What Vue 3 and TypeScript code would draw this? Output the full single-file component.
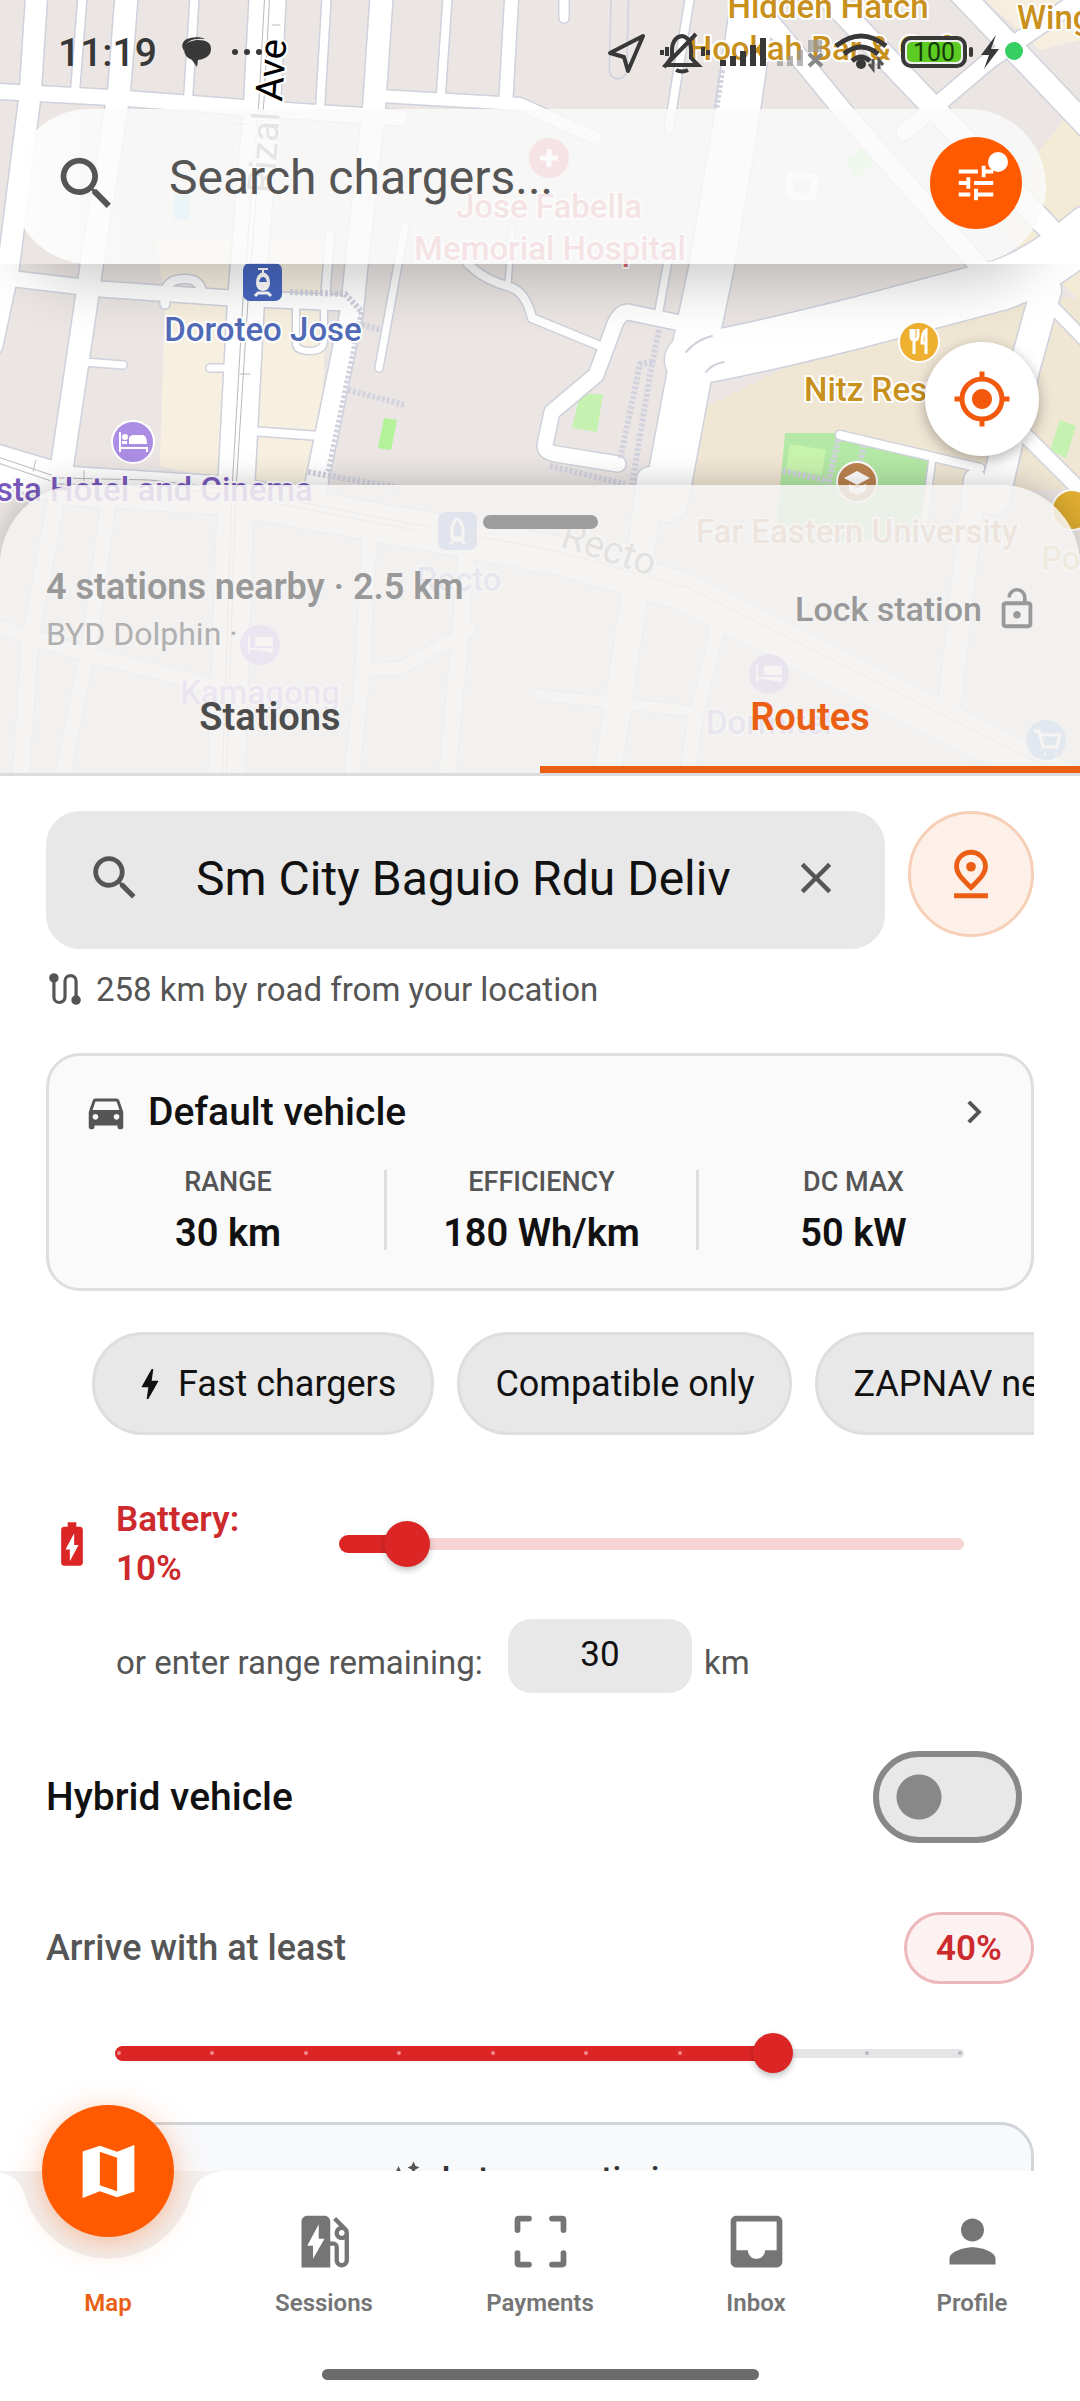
<script setup lang="ts">
import { computed, ref } from 'vue'

interface Road { d: string; w: number }
interface Block { d: string; fill: string }
interface Tab { label: string; icon: string }

const roads: Road[] = [
  { d: 'M37-10L30 96L8 270L-8 345', w: 21 },
  { d: 'M83-10L75 92', w: 8 },
  { d: 'M127-10L119 92L91 270L62 466', w: 22 },
  { d: 'M195-10L188 100', w: 8 },
  { d: 'M268-10L262 105L246 300L236 490L226 790', w: 36 },
  { d: 'M327-10L320 110', w: 8 },
  { d: 'M382-10L374 108L356 270L352 310L316 486', w: 22 },
  { d: 'M448-10L441 94', w: 8 },
  { d: 'M512-10L506 98', w: 13 },
  { d: 'M564-10L564 18', w: 9 },
  { d: 'M691-10L669 128', w: 8 },
  { d: 'M-10 91L120 98L250 108L400 118', w: 15 },
  { d: 'M380 96L520 104L595 138', w: 12 },
  { d: 'M-10 276L100 289L230 298L345 303', w: 15 },
  { d: 'M165 291Q168 279 185 279Q200 279 202 292', w: 8 },
  { d: 'M165 296V304', w: 9 },
  { d: 'M84 362L123 365', w: 7 },
  { d: 'M210 368H232', w: 7 },
  { d: 'M250 431L320 436', w: 8 },
  { d: 'M296 306V345Q298 351 310 351Q324 351 324 340V306', w: 6 },
  { d: 'M405 226L379 368', w: 7 },
  { d: 'M330 235L325 300', w: 8 },
  { d: 'M468 264Q484 280 510 287Q526 292 532 318L605 348', w: 8 },
  { d: 'M512 230L508 284', w: 5 },
  { d: 'M685 324L628 312Q618 312 612 332L596 375L552 412L545 445Q545 452 556 454L618 464', w: 15 },
  { d: 'M670 250L658 316', w: 7 },
  { d: 'M752 10L735 130L712 265L694 350L666 500', w: 44 },
  { d: 'M744-10L844 112L1000 290', w: 18 },
  { d: 'M812-20L930 104L1060 240', w: 22 },
  { d: 'M948-20L1100 140', w: 22 },
  { d: 'M1100-15L990 60L905 132', w: 16 },
  { d: 'M690 360Q750 350 860 322L1000 285Q1040 272 1090 230', w: 50 },
  { d: 'M1046 290L1024 370L994 500', w: 30 },
  { d: 'M1046 300L1100 356', w: 12 },
  { d: 'M1010 420L1100 510', w: 14 },
  { d: 'M840 435L980 468', w: 8 },
  { d: 'M932 462L922 540', w: 6 },
  { d: 'M-10 462L70 486L230 496L420 530L560 556L680 590L1100 800', w: 38 },
  { d: 'M60 480L30 640L20 790', w: 16 },
  { d: 'M110 490L90 640L60 790', w: 14 },
  { d: 'M370 530L362 680L350 790', w: 14 },
  { d: 'M467 545L460 640L446 790', w: 16 },
  { d: 'M-10 625L90 655L230 690', w: 14 },
  { d: 'M360 670L400 668L470 630', w: 12 },
  { d: 'M650 480L640 560L605 790', w: 26 },
  { d: 'M975 480L950 700', w: 22 },
  { d: 'M540 695L700 712', w: 10 },
  { d: 'M720 620L695 720L685 790', w: 14 },
]

const blocks: Block[] = [
  { d: 'M155 240H330L318 484L215 478L160 466L165 300Z', fill: '#f7f0e0' },
  { d: 'M1080 100L1040 150L1000 230L1080 300Z', fill: '#f4ebd6' },
  { d: 'M985 0H1080V40L1040 50Z', fill: '#f6efe0' },
  { d: 'M700 410L860 330L1020 290L1080 300V490H690Z', fill: '#f0e6d4' },
  { d: 'M785 433H840L930 462L922 540H775Z', fill: '#b4e8a6' },
  { d: 'M790 444L826 450L822 475L786 470Z', fill: '#c8f3ad' },
  { d: 'M580 394L603 394L597 432L572 428Z', fill: '#c5f2b0' },
  { d: 'M384 418L397 420L391 450L378 448Z', fill: '#b2f39a' },
  { d: 'M1060 420L1076 426L1066 458L1050 450Z', fill: '#c5f2b0' },
  { d: 'M845 160L870 142L880 158L856 178Z', fill: '#b9edaa' },
  { d: 'M174 195H190V220H174Z', fill: '#9bdcec' },
]

const tabs: Tab[] = [
  { label: 'Map', icon: 'M15 5.1L9 3 3 5.02v16.2l6-2.33 6 2.1 6-2.02V2.77L15 5.1zm0 13.79l-6-2.11V5.11l6 2.11v11.67z' },
  { label: 'Sessions', icon: 'M19.77 7.23l.01-.01-3.72-3.72L15 4.56l2.11 2.11c-.94.36-1.61 1.26-1.61 2.33 0 1.38 1.12 2.5 2.5 2.5.36 0 .69-.08 1-.21v7.21c0 .55-.45 1-1 1s-1-.45-1-1V14c0-1.1-.9-2-2-2h-1V5c0-1.1-.9-2-2-2H6c-1.1 0-2 .9-2 2v16h10v-7.5h1.5v5c0 1.38 1.12 2.5 2.5 2.5s2.5-1.12 2.5-2.5V9c0-.69-.28-1.32-.73-1.77zM18 10c-.55 0-1-.45-1-1s.45-1 1-1 1 .45 1 1-.45 1-1 1zM8 18v-4.5H6L10 6v5h2l-4 7z' },
  { label: 'Payments', icon: 'M4 3h4a1 1 0 0 1 0 2H5v3a1 1 0 0 1-2 0V4.5Q3 3 4.500 3zM16 3h3.500Q21 3 21 4.500V8a1 1 0 0 1-2 0V5h-3a1 1 0 0 1 0-2zM3 16a1 1 0 0 1 2 0v3h3a1 1 0 0 1 0 2H4.500Q3 21 3 19.500zM19 16a1 1 0 0 1 2 0v3.500Q21 21 19.500 21H16a1 1 0 0 1 0-2h3z' },
  { label: 'Inbox', icon: 'M19 3H4.99c-1.11 0-1.98.89-1.98 2L3 19c0 1.1.88 2 1.99 2H19c1.1 0 2-.9 2-2V5c0-1.11-.9-2-2-2zm0 12h-4c0 1.66-1.35 3-3 3s-3-1.34-3-3H4.99V5H19v10z' },
  { label: 'Profile', icon: 'M12 12c2.21 0 4-1.79 4-4s-1.79-4-4-4-4 1.79-4 4 1.79 4 4 4zm0 2c-2.67 0-8 1.34-8 4v2h16v-2c0-2.66-5.33-4-8-4z' },
]

const specs = [
  { name: 'RANGE', value: '30 km' },
  { name: 'EFFICIENCY', value: '180 Wh/km' },
  { name: 'DC MAX', value: '50 kW' },
]

const search = ref('')
const destination = ref('Sm City Baguio Rdu Delivery Hub')
const battery = ref(10)
const range = ref('30')
const hybrid = ref(false)
const reserve = ref(40)
const reserveFill = computed(() => ((reserve.value - 5) / 45) * 100)
</script>

<template>
  <div class="app">
    <svg class="map" viewBox="0 0 1080 776" preserveAspectRatio="xMidYMin slice" aria-hidden="true">
      <rect width="1080" height="776" fill="#ebe6e4" />
      <path v-for="b in blocks" :key="b.d" :d="b.d" :fill="b.fill" />
      <g fill="none" stroke-linejoin="round" stroke-linecap="round">
        <path v-for="r in roads" :key="'c' + r.d" :d="r.d" stroke="#cfd1dc" :stroke-width="r.w + 3" />
        <path d="M620-10L618 70" stroke="#cfd1dc" stroke-width="19" />
        <path d="M620-10L618 70" stroke="#ebe6e4" stroke-width="16" />
        <path v-for="r in roads" :key="r.d" :d="r.d" stroke="#fff" :stroke-width="r.w" />
        <path d="M270-10L264 100L248 300L236 490L226 790M265-10L259 100L243 300L232 490L222 790" stroke="#b9b9bb" />
        <path d="M-5 456L60 478L150 480L236 490L420 525L560 552L690 588L1090 788M-5 462L60 484L150 486L236 496L420 531" stroke="#b9b9bb" />
        <path d="M234 124H250M272 25H280M240 374H250M36 460L33 471M84 471V482" stroke="#b9b9bb" />
        <g stroke="#d3d3e0" stroke-width="6" stroke-dasharray="3 2" stroke-linecap="butt">
          <path d="M290 292L345 294L362 312L328 474M362 325L382 330M348 390L405 405M308 472L400 488" />
          <path d="M659 330L650 375L632 485M652 362L640 364L620 460M550 466L625 484M838 440L828 485M783 471L825 480M864 445L858 470M722 70L716 110" />
        </g>
        <path d="M686 352Q696 340 712 336M706 372Q712 364 724 362" stroke="#cfd1dc" stroke-width="2" />
        <path d="M790 175L815 178L812 198L790 195Z" stroke="#fff" stroke-width="7" />
      </g>
      <g class="place" text-anchor="middle">
        <circle cx="549" cy="158" r="20" fill="#dc6b78" />
        <path d="M549 149V167M540 158H558" stroke="#fff" stroke-width="5" />
        <text x="549" y="218" fill="#d96673">Jose Fabella</text>
        <text x="550" y="260" fill="#d96673">Memorial Hospital</text>
        <text x="828" y="18" fill="#c8901c">Hidden Hatch</text>
        <text x="828" y="60" fill="#c8901c">Hookah Bar &amp; Cafe</text>
        <text x="1017" y="29" fill="#c8901c" text-anchor="start">Wings</text>
        <rect x="243" y="263" width="39" height="38" rx="7" fill="#4766bf" />
        <path d="M258 269H268M263 269V273" fill="none" stroke="#fff" stroke-width="2" />
        <path fill-rule="evenodd" d="M263 272Q270 274 270 283Q270 290 263 291Q256 290 256 283Q256 274 263 272ZM259 282H267Q266 277 263 277Q260 277 259 282Z" fill="#fff" />
        <path d="M255 296L258 293H268L271 296" fill="none" stroke="#fff" stroke-width="3" />
        <text x="263" y="341" fill="#526bb8">Doroteo Jose</text>
        <circle cx="133" cy="442" r="21" fill="#ab8ee4" stroke="#fff" stroke-width="2" />
        <path d="M120 432V452M120 448H147V452" stroke="#fff" stroke-width="2" fill="none" />
        <path d="M129 444V438Q130 435 134 435H143Q147 436 147 444ZM122 444V441H127V444Z" fill="#fff" />
        <circle cx="125" cy="437" r="3" fill="#fff" />
        <text x="-4" y="501" fill="#7a5bbd" text-anchor="start">sta Hotel and Cinema</text>
        <circle cx="919" cy="342" r="20" fill="#efb030" stroke="#fff" stroke-width="2" />
        <path d="M911 329V336Q911 340 914 340Q918 340 918 336V329M914 329V354M926 354V330Q922 332 922 343H926" fill="none" stroke="#fff" stroke-width="3" />
        <text x="804" y="401" fill="#c8901c" text-anchor="start">Nitz Resto</text>
        <circle cx="857" cy="482" r="20" fill="#bc8350" stroke="#fff" stroke-width="2" />
        <path d="M844 478L857 471L870 478L857 485ZM849 484L857 488L866 484V491L857 495L849 491Z" fill="#fff" />
        <text x="857" y="543" fill="#bd8260">Far Eastern University</text>
        <circle cx="1072" cy="510" r="20" fill="#e0ae30" stroke="#fff" stroke-width="2" />
        <text x="1041" y="570" fill="#d8ae5c" text-anchor="start">Pop</text>
        <rect x="438" y="512" width="39" height="38" rx="7" fill="#6a86cf" />
        <path d="M452 538V528Q457 510 463 528V538ZM450 544L454 540H461L465 544" fill="none" stroke="#fff" stroke-width="3" />
        <text x="459" y="591" fill="#8494d8">Recto</text>
        <circle cx="260" cy="645" r="20" fill="#ab8ee4" />
        <path d="M249 636V653M249 649H272V653M256 645H272V638H256Z" stroke="#fff" stroke-width="2" fill="#fff" />
        <text x="260" y="704" fill="#ab8ee4">Kamagong</text>
        <circle cx="769" cy="674" r="20" fill="#9a89e0" />
        <path d="M757 665V682M757 678H781V682M765 674H781V667H765Z" stroke="#fff" stroke-width="2" fill="#fff" />
        <text x="769" y="734" fill="#9a89e0">Dormitel</text>
        <circle cx="1046" cy="740" r="20" fill="#6ea3df" />
        <path d="M1034 731H1039L1043 747H1057L1060 735H1040M1044 754h2M1055 754h2" fill="none" stroke="#fff" stroke-width="3" />
      </g>
      <text class="street" x="605" y="562" transform="rotate(18 608 562)" text-anchor="middle" fill="#777">Recto</text>
      <text class="street" transform="translate(282 102) rotate(-86)" fill="#000">Ave</text>
      <text class="street" transform="translate(274 194) rotate(-86)" fill="#777">Rizal</text>
    </svg>

    <header class="status">
      <time>11:19</time>
      <svg width="82" height="36" viewBox="0 0 82 36" fill="#383838" aria-hidden="true">
        <path d="M4 5C8 2 20 1 24 4Q4 2 3 16Q-1 10 4 5Z" />
        <path d="M17 5Q30 5 30 14T17 25L16 32L11 25Q3 22 3 14T17 5Z" />
        <circle cx="54" cy="17" r="3" /><circle cx="66" cy="17" r="3" /><circle cx="78" cy="17" r="3" />
      </svg>
      <svg class="tray" width="424" height="48" viewBox="0 0 424 48" aria-hidden="true">
        <path d="M10 24L43 7L28 42L24 28Z" fill="none" stroke="#383838" stroke-width="4" stroke-linejoin="round" />
        <g fill="none" stroke="#383838" stroke-width="4">
          <path d="M66 36H98L91 29V20Q90 8 82 7Q73 8 72 20V28ZM64 38L96 5M67 18V27M62 21V26M103 18V27M108 21V26" />
          <path d="M76 41Q82 44 88 41" />
        </g>
        <g fill="#383838">
          <path d="M120 37h6v-6h-6zM130 37h6V27h-6zM140 37h6V22h-6zM150 37h6V16h-6zM160 37h6V9h-6z" />
        </g>
        <path d="M177 37h6v-5h-6zM187 37h6V27h-6zM197 37h6V21h-6zM208 11h14v12h-14z" fill="#999" opacity=".7" />
        <path d="M209 25L222 37M222 25L209 37" stroke="#888" stroke-width="4" />
        <path d="M236 17Q261 -3 286 17M244 25Q261 11 278 25M252 32Q261 24 270 32" fill="none" stroke="#383838" stroke-width="5" />
        <circle cx="261" cy="35" r="5" fill="#383838" />
        <path d="M273 30V40L269 35M279 40V31L283 36" fill="none" stroke="#555" stroke-width="3" />
        <rect x="303" y="9" width="62" height="28" rx="8" fill="#eee" stroke="#383838" stroke-width="4" />
        <rect x="307" y="13" width="54" height="20" rx="5" fill="#5ccb22" />
        <rect x="369" y="18" width="4" height="10" rx="2" fill="#383838" />
        <text x="334" y="32" text-anchor="middle" font-size="25" fill="#153a0a">100</text>
        <path d="M396 6L381 26H389L384 40L399 20H391Z" fill="#383838" />
        <circle cx="414" cy="22" r="9" fill="#35cf62" />
      </svg>
    </header>

    <form class="finder" @submit.prevent>
      <svg class="ic" width="69" height="69" viewBox="0 0 24 24" aria-hidden="true"><path d="M15.5 14h-.79l-.28-.27C15.41 12.59 16 11.11 16 9.5 16 5.91 13.09 3 9.5 3S3 5.91 3 9.5 5.91 16 9.5 16c1.61 0 3.09-.59 4.23-1.57l.27.28v.79l5 4.99L20.49 19l-4.99-5zm-6 0C7.01 14 5 11.99 5 9.5S7.01 5 9.5 5 14 7.01 14 9.5 11.99 14 9.5 14z" /></svg>
      <input v-model="search" type="text" placeholder="Search chargers..." aria-label="Search chargers" />
      <button type="button" class="filter" aria-label="Filters">
        <svg width="46" height="46" viewBox="0 0 24 24" fill="#fff"><path d="M3 17v2h6v-2H3zM3 5v2h10V5H3zm10 16v-2h8v-2h-8v-2h-2v6h2zM7 9v2H3v2h4v2h2V9H7zm14 4v-2H11v2h10zm-6-4h2V7h4V5h-4V3h-2v6z" /></svg>
        <span class="badge"></span>
      </button>
    </form>

    <button type="button" class="locate" aria-label="My location">
      <svg width="60" height="60" viewBox="0 0 24 24" fill="#f2590d"><path d="M12 8c-2.210 0-4 1.790-4 4s1.790 4 4 4 4-1.790 4-4-1.790-4-4-4zm8.940 3A8.994 8.994 0 0 0 13 3.060V1h-2v2.060A8.994 8.994 0 0 0 3.060 11H1v2h2.060A8.994 8.994 0 0 0 11 20.940V23h2v-2.060A8.994 8.994 0 0 0 20.940 13H23v-2h-2.060zM12 19c-3.870 0-7-3.130-7-7s3.130-7 7-7 7 3.130 7 7-3.130 7-7 7z" /></svg>
    </button>

    <main class="sheet">
      <div class="head">
        <div class="grip"></div>
        <div class="summary">
          <div>
            <p class="near">4 stations nearby · 2.5 km</p>
            <p class="car">BYD Dolphin ·</p>
          </div>
          <button type="button" class="lock">
            Lock station
            <svg width="46" height="46" viewBox="0 0 24 24" fill="#999"><path d="M12 17c1.100 0 2-.9 2-2s-.9-2-2-2-2 .9-2 2 .9 2 2 2zm6-9h-1V6c0-2.760-2.240-5-5-5S7 3.240 7 6h1.900c0-1.710 1.390-3.100 3.100-3.100s3.100 1.390 3.100 3.100v2H6c-1.100 0-2 .9-2 2v10c0 1.100.9 2 2 2h12c1.100 0 2-.9 2-2V10c0-1.100-.9-2-2-2zm0 12H6V10h12v10z" /></svg>
          </button>
        </div>
        <div class="modes" role="tablist">
          <button type="button" role="tab" aria-selected="false">Stations</button>
          <button type="button" role="tab" aria-selected="true" class="on">Routes</button>
        </div>
      </div>

      <div class="body">
        <div class="goal">
          <div class="field">
            <svg class="ic" width="58" height="58" viewBox="0 0 24 24" aria-hidden="true"><path d="M15.5 14h-.79l-.28-.27C15.41 12.59 16 11.11 16 9.5 16 5.91 13.09 3 9.5 3S3 5.91 3 9.5 5.91 16 9.5 16c1.61 0 3.09-.59 4.23-1.57l.27.28v.79l5 4.99L20.49 19l-4.99-5zm-6 0C7.01 14 5 11.99 5 9.5S7.01 5 9.5 5 14 7.01 14 9.5 11.99 14 9.5 14z" /></svg>
            <input v-model="destination" type="text" aria-label="Destination" />
            <button type="button" aria-label="Clear destination" @click="destination = ''">
              <svg class="ic" width="52" height="52" viewBox="0 0 24 24"><path d="M19 6.410L17.590 5 12 10.590 6.410 5 5 6.410 10.590 12 5 17.590 6.410 19 12 13.410 17.590 19 19 17.590 13.410 12z" /></svg>
            </button>
          </div>
          <button type="button" class="pin" aria-label="Pick on map">
            <svg width="58" height="58" viewBox="0 0 24 24" fill="none" stroke="#ea5f14" stroke-width="2"><path d="M12 3C8.700 3 6 5.600 6 8.900c0 3.300 3.300 6 6 8.700 2.700-2.700 6-5.400 6-8.700C18 5.600 15.300 3 12 3zM5 21h14" /><circle cx="12" cy="9" r="2" fill="#ea5f14" stroke="none" /></svg>
          </button>
        </div>

        <p class="distance">
          <svg width="38" height="38" viewBox="0 0 24 24" fill="none" stroke="#555" stroke-width="2" aria-hidden="true"><path d="M5 5v12a3.500 3.500 0 0 0 7 0V7a3.500 3.500 0 0 1 7 0v11" /><circle cx="5" cy="5" r="2" fill="#555" /><circle cx="19" cy="19" r="2" fill="#555" /></svg>
          258 km by road from your location
        </p>

        <section class="vehicle">
          <a href="#vehicle" class="name">
            <svg class="ic" width="46" height="46" viewBox="0 0 24 24" aria-hidden="true"><path d="M18.920 6.010C18.720 5.420 18.160 5 17.500 5h-11c-.66 0-1.210.42-1.420 1.010L3 12v8c0 .55.45 1 1 1h1c.55 0 1-.45 1-1v-1h12v1c0 .55.45 1 1 1h1c.55 0 1-.45 1-1v-8l-2.080-5.990zM6.500 16c-.83 0-1.500-.67-1.500-1.500S5.670 13 6.500 13s1.500.67 1.500 1.500S7.330 16 6.500 16zm11 0c-.83 0-1.500-.67-1.500-1.500s.67-1.500 1.500-1.500 1.500.67 1.500 1.500-.67 1.500-1.500 1.500zM5 11l1.500-4.500h11L19 11H5z" /></svg>
            <span>Default vehicle</span>
            <svg class="ic" width="46" height="46" viewBox="0 0 24 24" aria-hidden="true"><path d="M10 6L8.590 7.410 13.170 12l-4.580 4.590L10 18l6-6z" /></svg>
          </a>
          <dl class="specs">
            <div v-for="s in specs" :key="s.name"><dt>{{ s.name }}</dt><dd>{{ s.value }}</dd></div>
          </dl>
        </section>

        <div class="chips">
          <button type="button" class="fast">
            <svg width="40" height="40" viewBox="0 0 24 24" fill="#111" aria-hidden="true"><path d="M11 21h-1l1-7H7.500c-.58 0-.57-.32-.38-.66C8.480 10.940 10.420 7.540 13 3h1l-1 7h3.500c.49 0 .56.33.47.51C12.960 17.550 11 21 11 21z" /></svg>
            Fast chargers
          </button>
          <button type="button">Compatible only</button>
          <button type="button">ZAPNAV network</button>
        </div>

        <div class="battery">
          <svg width="52" height="52" viewBox="0 0 24 24" fill="#dc2626" aria-hidden="true"><path d="M15.670 4H14V2h-4v2H8.330C7.600 4 7 4.600 7 5.330v15.330C7 21.400 7.600 22 8.330 22h7.330c.74 0 1.340-.6 1.340-1.330V5.330C17 4.600 16.400 4 15.670 4zM11 20v-5.500H9L13 7v5.500h2L11 20z" /></svg>
          <label for="battery">Battery:<br />{{ battery }}%</label>
          <div class="slider charge">
            <div class="rail"><div class="fill" :style="{ width: battery + '%' }"></div></div>
            <input id="battery" v-model.number="battery" type="range" min="0" max="100" />
          </div>
        </div>

        <div class="remaining">
          <label for="range">or enter range remaining:</label>
          <input id="range" v-model="range" type="text" inputmode="numeric" />
          <span>km</span>
        </div>

        <div class="hybrid">
          <label for="hybrid">Hybrid vehicle</label>
          <input id="hybrid" v-model="hybrid" type="checkbox" role="switch" />
        </div>

        <div class="arrive">
          <label for="reserve">Arrive with at least</label>
          <output for="reserve">{{ reserve }}%</output>
        </div>
        <div class="slider reserve">
          <div class="rail">
            <div class="fill" :style="{ width: reserveFill + '%' }"></div>
            <div class="ticks"><i v-for="n in 10" :key="n"></i></div>
          </div>
          <input id="reserve" v-model.number="reserve" type="range" min="5" max="50" step="5" />
        </div>

        <button type="button" class="optimize">
          <svg width="36" height="36" viewBox="0 0 24 24" fill="#555" aria-hidden="true"><path d="M19 9l1.250-2.750L23 5l-2.750-1.250L19 1l-1.250 2.750L15 5l2.750 1.250L19 9zM11.500 9.500L9 4 6.500 9.500 1 12l5.500 2.500L9 20l2.500-5.500L17 12l-5.500-2.500z" /></svg>
          Let app optimize
        </button>
      </div>
    </main>

    <nav class="nav">
      <svg class="notch" width="232" height="92" viewBox="0 0 232 92" aria-hidden="true">
        <path d="M0 0C20 2 28 10 33 24A86 86 0 0 0 199 24C204 10 212 2 232 0Z" fill="#f2f0ef" />
      </svg>
      <div class="items">
        <a v-for="(t, i) in tabs" :key="t.label" href="#" :class="{ active: i === 0 }">
          <span class="glyph"><svg width="69" height="69" viewBox="0 0 24 24" aria-hidden="true"><path :d="t.icon" /></svg></span>
          <span>{{ t.label }}</span>
        </a>
      </div>
      <div class="home"></div>
    </nav>
  </div>
</template>

<style>
body { margin: 0; background: #fff; }
</style>

<style scoped>
.app { position: relative; height: 100vh; display: flex; flex-direction: column; overflow: hidden; font-family: Roboto, "Liberation Sans", sans-serif; font-size: 34px; color: #111; }
.app * { box-sizing: border-box; }
svg { display: block; flex: none; }
p, dl, dd { margin: 0; }
button, input { font: inherit; color: inherit; border: 0; padding: 0; background: none; }
input { min-width: 0; outline: 0; }
a { color: inherit; text-decoration: none; }
.ic { fill: #555; }

.map { position: absolute; top: 0; left: 0; width: 100%; height: 776px; }
.place text { font-size: 33px; font-weight: 500; paint-order: stroke; stroke: #fff; stroke-width: 4px; stroke-linejoin: round; }
.street { font-size: 38px; paint-order: stroke; stroke: #fff; stroke-width: 4px; }

.status { position: relative; flex: none; height: 109px; padding: 0 56px 4px 58px; display: flex; align-items: center; gap: 24px; color: #383838; }
.status time { font-size: 39px; font-weight: 500; }
.tray { margin-left: auto; }

.finder { position: relative; flex: none; height: 155px; margin: 0 34px 0 12px; padding: 0 24px 7px 40px; display: flex; align-items: center; border-radius: 78px; background: linear-gradient(90deg, rgba(255, 255, 255, .9), rgba(250, 250, 250, .84) 12%); }
.finder::before { content: ""; position: absolute; inset: 0; border-radius: 78px; box-shadow: 0 16px 60px rgba(0, 0, 0, .22); clip-path: path(evenodd, "M-100 155H1200V330H-100Z"); }
.finder input { flex: 1; margin-left: 48px; height: 60px; margin-bottom: 12px; font-size: 48px; }
.finder input::placeholder { color: #555; opacity: 1; }
.filter { position: relative; width: 92px; height: 92px; border-radius: 50%; background: #ff5a00; display: grid; place-items: center; }
.badge { position: absolute; top: 15px; right: 14px; width: 20px; height: 20px; border-radius: 50%; background: #fff; }

.locate { position: relative; flex: none; align-self: flex-end; width: 114px; height: 114px; margin: 78px 41px 29px 0; border-radius: 50%; background: #fff; display: grid; place-items: center; box-shadow: 0 4px 14px rgba(0, 0, 0, .3); }

.sheet { position: relative; flex: 1; min-height: 0; display: flex; flex-direction: column; }
.head { flex: none; border-radius: 80px 80px 0 0; background: rgba(243, 242, 241, .87); box-shadow: 0 -3px 30px rgba(0, 0, 0, .2); clip-path: inset(-60px 0 0 0); border-bottom: 3px solid #dcdcdc; }
.grip { width: 115px; height: 14px; margin: 0 auto; position: relative; top: 30px; border-radius: 7px; background: #9d9d9d; }
.summary { height: 158px; padding: 62px 46px 0; display: flex; justify-content: space-between; align-items: center; }
.near { font-size: 36px; line-height: 50px; font-weight: 600; color: #999; }
.car { font-size: 32px; line-height: 44px; color: #b0b0b0; }
.lock { display: flex; align-items: center; gap: 12px; font-size: 34px; font-weight: 500; color: #999; margin-right: -6px; }
.modes { display: flex; }
.modes button { flex: 1; height: 116px; padding-top: 10px; font-size: 38px; font-weight: 600; color: #4d4d4d; border-bottom: 7px solid transparent; }
.modes .on { color: #ea5f14; border-color: #ea5f14; }

.body { flex: 1; min-height: 0; overflow: hidden; padding: 35px 46px 0; background: #fff; }
.goal { display: flex; gap: 23px; align-items: flex-start; }
.field { flex: 1; min-width: 0; height: 138px; padding: 0 43px 4px 40px; display: flex; align-items: center; border-radius: 34px; background: #e8e8e8; }
.field input { flex: 1; margin: 0 58px 0 52px; height: 60px; font-size: 48px; }
.pin { width: 126px; height: 126px; border-radius: 50%; border: 3px solid #f6cfb6; background: #fdf0e8; display: grid; place-items: center; }
.distance { display: flex; align-items: center; gap: 12px; height: 80px; color: #555; font-size: 33px; }

.vehicle { margin-top: 24px; padding: 24px 23px 0; height: 238px; border: 3px solid #dedede; border-radius: 34px; background: #fafafa; }
.name { display: flex; align-items: center; padding: 0 11px; height: 64px; font-size: 39px; font-weight: 500; }
.name span { flex: 1; margin-left: 19px; }
.specs { display: grid; grid-template-columns: repeat(3, 1fr); margin-top: 26px; text-align: center; }
.specs div { height: 80px; }
.specs div + div { border-left: 3px solid #dedede; }
.specs dt { font-size: 27px; line-height: 24px; font-weight: 500; color: #555; }
.specs dd { font-size: 38px; line-height: 44px; margin-top: 17px; font-weight: 600; }

.chips { display: flex; gap: 23px; margin-top: 41px; padding-left: 46px; overflow: hidden; }
.chips button { flex: none; display: flex; align-items: center; height: 103px; padding: 0 35px; border: 3px solid #dedede; border-radius: 52px; background: #e8e8e8; font-size: 36px; white-space: nowrap; }
.chips .fast { gap: 8px; }

.battery { display: flex; align-items: center; height: 98px; margin-top: 60px; color: #cc2a2d; font-size: 35px; }
.battery label { margin-left: 18px; width: 207px; line-height: 49px; font-weight: 600; }
.slider { position: relative; flex: 1; height: 46px; }
.rail { position: absolute; left: 16px; right: 16px; top: 17px; height: 12px; border-radius: 6px; background: #f8d3d3; }
.fill { position: absolute; left: 0; top: -3px; height: 18px; min-width: 40px; border-radius: 9px; background: #dc2626; }
.slider input { position: absolute; inset: 0; width: 100%; height: 100%; margin: 0; appearance: none; }
.slider input::-webkit-slider-thumb { appearance: none; width: 46px; height: 46px; border-radius: 50%; background: #dc2626; box-shadow: 0 3px 6px rgba(0, 0, 0, .25); }
.charge { margin-right: 54px; }

.remaining { display: flex; align-items: center; height: 76px; margin-top: 25px; padding-left: 70px; color: #555; font-size: 33px; }
.remaining label, .remaining span { padding-top: 12px; }
.remaining label { width: 368px; white-space: nowrap; }
.remaining input { width: 184px; height: 74px; margin: 0 12px 0 24px; padding-bottom: 4px; border-radius: 23px; background: #e8e8e8; text-align: center; font-size: 35px; color: #111; }

.hybrid { display: flex; align-items: center; justify-content: space-between; height: 92px; margin-top: 57px; font-size: 39px; font-weight: 500; }
.hybrid input { appearance: none; width: 149px; height: 92px; margin: 0 12px 0 0; border: 6px solid #888; border-radius: 46px; background: radial-gradient(circle at 40px 40px, #888 22px, transparent 23px) #e8e8e8; }

.arrive { display: flex; align-items: center; justify-content: space-between; height: 72px; margin-top: 69px; font-size: 36px; font-weight: 500; color: #555; }
.arrive output { width: 130px; height: 72px; border: 3px solid #ecb8bb; border-radius: 36px; background: #fdf2f2; color: #cc2a2d; font-size: 35px; font-weight: 600; display: grid; place-items: center; }
.reserve { height: 40px; margin: 49px 54px 0 53px; }
.reserve .rail { top: 16px; height: 9px; background: #e5e5e8; }
.reserve .fill { height: 15px; }
.reserve input::-webkit-slider-thumb { width: 40px; height: 40px; }
.ticks { position: absolute; left: 2px; right: 2px; top: 2px; display: flex; justify-content: space-between; }
.ticks i { width: 4px; height: 4px; border-radius: 50%; background: #f08a8a; }
.ticks i:nth-child(n + 9) { background: #b8b8c0; }
.optimize { display: flex; align-items: center; justify-content: center; gap: 20px; width: 100%; height: 112px; margin-top: 49px; border: 3px solid #d2d5d9; border-radius: 34px; background: #f8f9fb; font-weight: 500; color: #333; }

.nav { position: relative; flex: none; height: 230px; padding-bottom: 21px; background: #fff; display: flex; flex-direction: column; justify-content: space-between; }
.notch { position: absolute; top: 0; left: calc(10% - 116px); }
.items { display: flex; }
.items a { flex: 1; display: flex; flex-direction: column; align-items: center; height: 152px; padding-top: 36px; font-size: 24px; line-height: 30px; font-weight: 600; color: #757575; fill: #757575; }
.glyph { display: grid; place-items: center; height: 69px; margin-bottom: 12px; }
.items .active { position: relative; color: #ea5f14; fill: #fff; }
.active .glyph { width: 132px; height: 132px; margin: -102px 0 51px; border-radius: 50%; background: #ff5a00; box-shadow: 0 6px 30px rgba(255, 90, 0, .35); }
.home { width: 437px; height: 11px; margin: 0 auto; border-radius: 6px; background: #6b6b6b; }
</style>
